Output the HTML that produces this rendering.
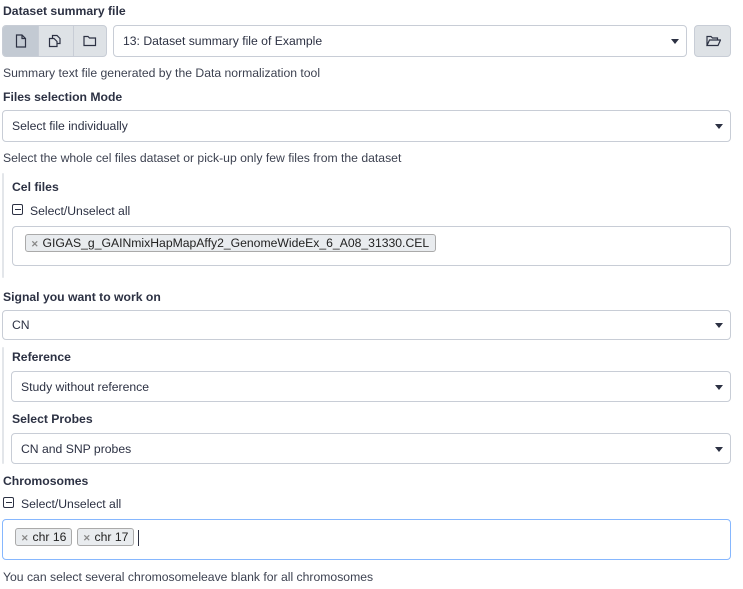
<!DOCTYPE html>
<html><head><meta charset="utf-8"><style>
*{box-sizing:border-box;margin:0;padding:0}
body{width:743px;height:589px;background:#fff;font-family:"Liberation Sans",sans-serif;font-size:12.2px;color:#2c3143;position:relative;overflow:hidden}
.a{position:absolute;white-space:nowrap}
.b{font-weight:bold}
.help{color:#3d4251}
.sel{position:absolute;border:1px solid #c8cdd6;border-radius:4px;background:#fff}
.sel span{position:absolute;left:9px;top:50%;transform:translateY(-50%);white-space:nowrap}
.sel i{position:absolute;right:7px;top:50%;margin-top:-2px;border-left:4px solid transparent;border-right:4px solid transparent;border-top:5px solid #2c3143}
.tag{position:absolute;border:1px solid #aaa;border-radius:3px;background:#e9ecef;height:18px;line-height:16px;padding:0 4px 0 5px;white-space:nowrap;color:#222}
.tag b{color:#888;font-size:9px;margin-right:4px;font-weight:bold}
.minus{position:absolute;width:11px;height:11px;border:1.5px solid #2c3143;border-radius:2px}
.minus:after{content:"";position:absolute;left:1.5px;right:1.5px;top:3.5px;height:1.5px;background:#2c3143}
.vb{position:absolute;border-left:2px solid #e3e6ea;border-radius:4px}
</style></head><body>
<div class="a b" style="left:3px;top:4px">Dataset summary file</div>
<div class="a" style="left:2px;top:25px;width:105px;height:32px;border:1px solid #c8cdd6;border-radius:4px;background:#dee2e6;overflow:hidden">
 <div style="position:absolute;left:0;top:0;width:35px;height:30px;background:#c3cad3"></div>
 <div style="position:absolute;left:35px;top:0;width:1px;height:30px;background:#c8cdd6"></div>
 <div style="position:absolute;left:70px;top:0;width:1px;height:30px;background:#c8cdd6"></div>
 <svg style="position:absolute;left:12px;top:8px" width="12" height="14" viewBox="0 0 12 14" fill="none" stroke="#2c3143" stroke-width="1.2"><path d="M1.5 1h5.5l3.5 3.5v8.5h-9z M7 1v3.5h3.5"/></svg>
 <svg style="position:absolute;left:45px;top:8px" width="14" height="14" viewBox="0 0 14 14" fill="none" stroke="#2c3143" stroke-width="1.2"><path d="M4.5 4V1.5h4.5l3 3v5h-3M1.5 4.5h4.5l3 3v5h-7.5z"/></svg>
 <svg style="position:absolute;left:80px;top:9px" width="14" height="12" viewBox="0 0 14 12" fill="none" stroke="#2c3143" stroke-width="1.2"><path d="M1 1.5h4l1.5 1.5h6v7.5h-11.5z"/></svg>
</div>
<div class="sel" style="left:113px;top:25px;width:574px;height:32px"><span>13: Dataset summary file of Example</span><i></i></div>
<div class="a" style="left:694px;top:25px;width:37px;height:32px;border:1px solid #c8cdd6;border-radius:4px;background:#dee2e6">
 <svg style="position:absolute;left:11px;top:9px" width="15" height="12" viewBox="0 0 15 12" fill="none" stroke="#2c3143" stroke-width="1.2"><path d="M1 10.5v-9h4l1.5 1.5h5v2M1 10.5l2.5-5.5h11l-2.5 5.5z"/></svg>
</div>
<div class="a help" style="left:3px;top:66px">Summary text file generated by the Data normalization tool</div>
<div class="a b" style="left:3px;top:90px">Files selection Mode</div>
<div class="sel" style="left:2px;top:110px;width:729px;height:32px"><span>Select file individually</span><i></i></div>
<div class="a help" style="left:3px;top:151px">Select the whole cel files dataset or pick-up only few files from the dataset</div>
<div class="vb" style="left:2px;top:173px;height:105px"></div>
<div class="a b" style="left:12px;top:180px">Cel files</div>
<div class="minus" style="left:12px;top:204px"></div>
<div class="a" style="left:30px;top:204px">Select/Unselect all</div>
<div class="sel" style="left:12px;top:226px;width:719px;height:40px"></div>
<div class="tag" style="left:25px;top:234px;width:411px"><b>✕</b>GIGAS_g_GAINmixHapMapAffy2_GenomeWideEx_6_A08_31330.CEL</div>
<div class="a b" style="left:3px;top:290px">Signal you want to work on</div>
<div class="sel" style="left:2px;top:310px;width:729px;height:30px"><span>CN</span><i></i></div>
<div class="vb" style="left:2px;top:347px;height:117px"></div>
<div class="a b" style="left:12px;top:350px">Reference</div>
<div class="sel" style="left:11px;top:371px;width:720px;height:31px"><span>Study without reference</span><i></i></div>
<div class="a b" style="left:12px;top:412px">Select Probes</div>
<div class="sel" style="left:11px;top:433px;width:720px;height:31px"><span>CN and SNP probes</span><i></i></div>
<div class="a b" style="left:3px;top:474px">Chromosomes</div>
<div class="minus" style="left:3px;top:497px"></div>
<div class="a" style="left:21px;top:497px">Select/Unselect all</div>
<div class="sel" style="left:2px;top:519px;width:729px;height:41px;border-color:#86b7fe"></div>
<div class="tag" style="left:15px;top:528px;width:57px"><b>✕</b>chr 16</div>
<div class="tag" style="left:77px;top:528px;width:57px"><b>✕</b>chr 17</div>
<div class="a" style="left:138px;top:530px;width:1px;height:16px;background:#2c3143"></div>
<div class="a help" style="left:3px;top:570px">You can select several chromosomeleave blank for all chromosomes</div>
</body></html>
